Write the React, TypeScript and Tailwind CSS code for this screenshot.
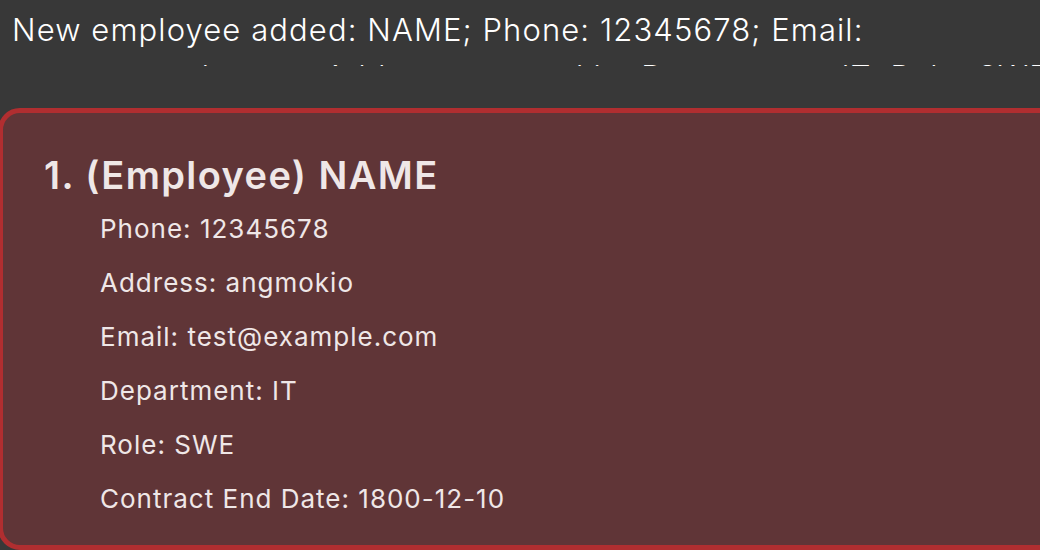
export default function App() {
  const details = [
    "Phone: 12345678",
    "Address: angmokio",
    "Email: test@example.com",
    "Department: IT",
    "Role: SWE",
    "Contract End Date: 1800-12-10",
  ];

  return (
    <div className="h-[550px] w-[1040px] overflow-hidden bg-[#383838] font-['Inter',sans-serif]">
      {/* result message box, second line is cut off */}
      <div className="h-[66px] overflow-hidden px-3 pt-[7px]">
        <p className="text-[31px] font-light leading-[46px] tracking-[1.1px] text-white whitespace-nowrap">
          New employee added: NAME; Phone: 12345678; Email:
          <br />
          <span className="relative top-[1px]">
            test@example.com; Address: angmokio; Department: IT; Role: SWE; Contract End Date: 1800-12-10
          </span>
        </p>
      </div>

      {/* employee card */}
      <div className="mt-[42px] -ml-[2px] w-[1080px] h-[442px] rounded-[22px] border-[5px] border-[#b02e30] bg-[#603537] pl-[41px] pt-[36px]">
        <h1 className="text-[38px] font-semibold leading-[52px] tracking-[1.4px] text-[#efe7e7]">1. (Employee) NAME</h1>
        <div className="flex flex-col pl-[56px] pt-[1px]">
          {details.map((d) => (
            <p key={d} className="text-[26px] leading-[54px] tracking-[1px] text-[#efe7e7]">
              {d}
            </p>
          ))}
        </div>
      </div>
    </div>
  );
}
